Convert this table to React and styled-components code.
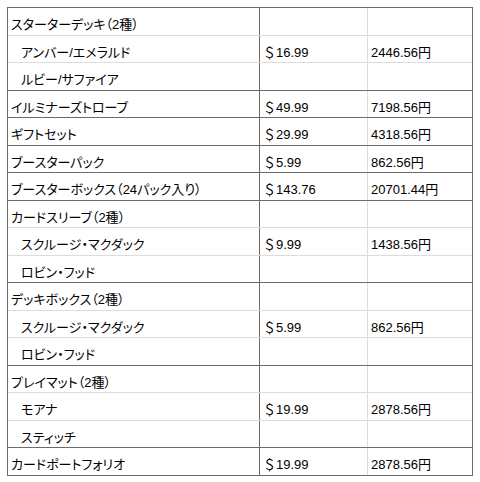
import React from "react";
import styled, { createGlobalStyle } from "styled-components";

const Global = createGlobalStyle`
  html, body { margin: 0; padding: 0; background: #fff; }
  body { font-family: "Liberation Sans", "Noto Sans CJK JP", sans-serif; }
`;

const Sheet = styled.div`
  margin: 7px 0 0 7px;
  width: 466px;
  box-sizing: border-box;
  border: 1px solid #6b6b6b;
  display: flex;
  flex-direction: column;
  color: #000;
  font-size: 13px;
`;

const Row = styled.div`
  display: flex;
  height: 27.5px;
  box-sizing: border-box;
  border-top: 1px solid ${(p) => (p.$groupStart ? "#6b6b6b" : "#dcdcdc")};
  ${(p) => p.$first && "border-top: none; height: 26.7px;"}
`;

const Cell = styled.div`
  display: flex;
  align-items: center;
  box-sizing: border-box;
  padding: 5px 0 0 ${(p) => p.$pad}px;
  white-space: nowrap;
`;

const NameCell = styled(Cell)`
  width: 252px;
  border-right: 1px solid #6b6b6b;
  font-feature-settings: "palt";
`;

const UsdCell = styled(Cell)`
  width: 108px;
  border-right: 1px solid #dcdcdc;
`;

const YenCell = styled(Cell)`
  flex: 1;
`;

const groups = [
  { name: "スターターデッキ（2種）", subs: [["アンバー/エメラルド", "＄16.99", "2446.56円"], ["ルビー/サファイア", "", ""]] },
  { name: "イルミナーズトローブ", usd: "＄49.99", yen: "7198.56円" },
  { name: "ギフトセット", usd: "＄29.99", yen: "4318.56円" },
  { name: "ブースターパック", usd: "＄5.99", yen: "862.56円" },
  { name: "ブースターボックス（24パック入り）", usd: "＄143.76", yen: "20701.44円" },
  { name: "カードスリーブ（2種）", subs: [["スクルージ・マクダック", "＄9.99", "1438.56円"], ["ロビン・フッド", "", ""]] },
  { name: "デッキボックス（2種）", subs: [["スクルージ・マクダック", "＄5.99", "862.56円"], ["ロビン・フッド", "", ""]] },
  { name: "プレイマット（2種）", subs: [["モアナ", "＄19.99", "2878.56円"], ["スティッチ", "", ""]] },
  { name: "カードポートフォリオ", usd: "＄19.99", yen: "2878.56円" },
];

export default function App() {
  const rows = [];
  groups.forEach((g, gi) => {
    rows.push(
      <Row key={`g${gi}`} $groupStart $first={gi === 0}>
        <NameCell $pad={3}>{g.name}</NameCell>
        <UsdCell $pad={3}>{g.usd || ""}</UsdCell>
        <YenCell $pad={3}>{g.yen || ""}</YenCell>
      </Row>
    );
    (g.subs || []).forEach((s, si) => {
      rows.push(
        <Row key={`g${gi}s${si}`}>
          <NameCell $pad={13}>{s[0]}</NameCell>
          <UsdCell $pad={3}>{s[1]}</UsdCell>
          <YenCell $pad={3}>{s[2]}</YenCell>
        </Row>
      );
    });
  });
  return (
    <>
      <Global />
      <Sheet>{rows}</Sheet>
    </>
  );
}
